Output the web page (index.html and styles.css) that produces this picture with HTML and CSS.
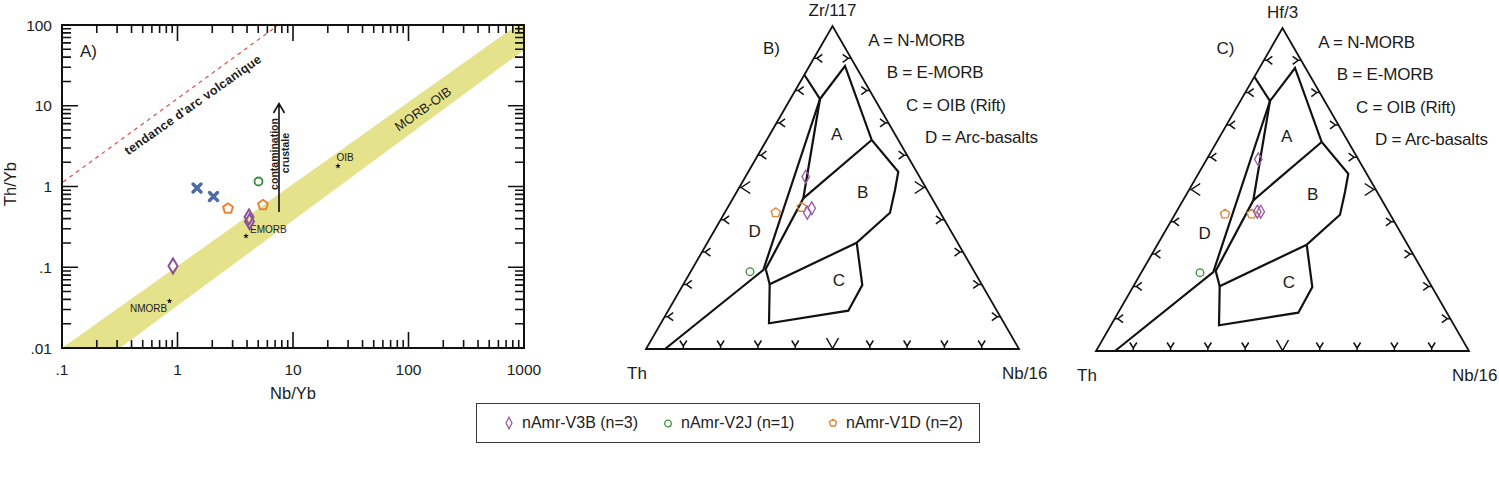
FILE: index.html
```html
<!DOCTYPE html>
<html lang="fr">
<head>
<meta charset="utf-8">
<title>Diagrammes géochimiques</title>
<link rel="stylesheet" href="styles.css">
</head>
<body>
<div class="figure">
  <div class="panels">
    <svg class="panel" width="600" height="400" viewBox="0 0 600 400">
      <defs>
        <path id="xdec" class="tick" d="M34.77 0v-8M55.11 0v-8M69.54 0v-8M80.73 0v-8M89.88 0v-8M97.61 0v-8M104.31 0v-8M110.21 0v-8M115.5 0v-16"/>
        <path id="ydec" class="tick" d="M0 -24.31h9M0 -38.53h9M0 -48.62h9M0 -56.44h9M0 -62.84h9M0 -68.24h9M0 -72.92h9M0 -77.05h9M0 -80.75h16"/>
        <path id="mkDiaA" d="M0 -7.5L4.5 0L0 7.5L-4.5 0Z"/>
        <path id="mkPentA" d="M0 -5.2L4.95 -1.6L3.06 4.2L-3.06 4.2L-4.95 -1.6Z"/>
        <path id="mkDia" d="M0 -6.5L3.8 0L0 6.5L-3.8 0Z"/>
        <path id="mkPent" d="M0 -4.8L4.57 -1.48L2.82 3.88L-2.82 3.88L-4.57 -1.48Z"/>
        <path id="mkX" d="M-4 -4L4 4M4 -4L-4 4"/>
        <polygon id="mkStar" points="0,-3 0.71,-0.97 2.85,-0.93 1.14,0.37 1.76,2.43 0,1.2 -1.76,2.43 -1.14,0.37 -2.85,-0.93 -0.71,-0.97"/>
        <path id="tb" d="M0 0v-3M-3.5 -8.5L0 -3L3.5 -8.5"/>
        <path id="tbM" d="M-6 -11L0 -0.5L6 -11"/>
        <path id="tl" d="M0 0h3M8.5 -4L3 0L8.5 4"/>
        <path id="tlM" d="M0 0h2M11 -6L2 0L11 6"/>
      </defs>

      <!-- MORB-OIB array -->
      <polygon class="band" points="62,348 120,348 524,50 524,25 517,25"/>
      <line class="arc" x1="63" y1="182" x2="277" y2="26"/>

      <text class="lbl-arc" transform="translate(193 105) rotate(-35.2)" text-anchor="middle" dy="4">tendance d'arc volcanique</text>
      <text class="lbl-band" transform="translate(423 109) rotate(-35.5)" text-anchor="middle" dy="4.5">MORB-OIB</text>

      <!-- axes -->
      <rect class="axis" x="62" y="25" width="462" height="323"/>
      <g id="xticks">
        <use href="#xdec" x="62" y="348"/>
        <use href="#xdec" x="177.5" y="348"/>
        <use href="#xdec" x="293" y="348"/>
        <use href="#xdec" x="408.5" y="348"/>
      </g>
      <use href="#xticks" transform="matrix(1 0 0 -1 0 373)"/>
      <g id="yticks">
        <use href="#ydec" x="62" y="348"/>
        <use href="#ydec" x="62" y="267.25"/>
        <use href="#ydec" x="62" y="186.5"/>
        <use href="#ydec" x="62" y="105.75"/>
      </g>
      <use href="#yticks" transform="matrix(-1 0 0 1 586 0)"/>

      <g class="t-num" text-anchor="end">
        <text x="52" y="30.5">100</text>
        <text x="52" y="111">10</text>
        <text x="52" y="192">1</text>
        <text x="52" y="272.5">.1</text>
        <text x="52" y="353.5">.01</text>
      </g>
      <g class="t-num" text-anchor="middle">
        <text x="62" y="375">.1</text>
        <text x="177.5" y="375">1</text>
        <text x="293" y="375">10</text>
        <text x="408.5" y="375">100</text>
        <text x="524" y="375">1000</text>
      </g>
      <text class="t-axis" x="293" y="399" text-anchor="middle">Nb/Yb</text>
      <text class="t-axis" transform="translate(16 184) rotate(-90)" text-anchor="middle">Th/Yb</text>
      <text class="t-panel" x="80" y="56.5">A)</text>

      <!-- crustal contamination arrow -->
      <path class="arrow" d="M279 212V104M273.5 113L279 103.5L284.5 113"/>
      <text class="lbl-contam" transform="translate(277.5 154) rotate(-90)" text-anchor="middle">contamination</text>
      <text class="lbl-contam" transform="translate(289 153) rotate(-90)" text-anchor="middle">crustale</text>

      <!-- reference compositions -->
      <use href="#mkStar" class="star" x="169.5" y="301"/>
      <use href="#mkStar" class="star" x="246" y="236"/>
      <use href="#mkStar" class="star" x="338" y="166"/>
      <text class="lbl-ref" x="130" y="312">NMORB</text>
      <text class="lbl-ref" x="250" y="233">EMORB</text>
      <text class="lbl-ref" x="336.5" y="160.5">OIB</text>

      <!-- samples -->
      <use href="#mkX" class="m-x" x="197" y="188"/>
      <use href="#mkX" class="m-x" x="213.5" y="196.5"/>
      <circle class="m-circ-a" cx="258.5" cy="181.5" r="4"/>
      <use href="#mkPentA" class="m-pent-a" x="228" y="208.5"/>
      <use href="#mkPentA" class="m-pent-a" x="263" y="205"/>
      <use href="#mkDiaA" class="m-dia-a" x="173" y="266"/>
      <use href="#mkDiaA" class="m-dia-a" x="249" y="217"/>
      <use href="#mkDiaA" class="m-dia-a" x="249.5" y="221.5"/>
    </svg>

    <svg class="panel" width="450" height="400" viewBox="600 0 450 400">
      <g id="tern">
        <polygon class="tri" points="646,349 1019,349 832.5,26"/>
        <g class="tt">
          <use href="#tb" x="683.3" y="349"/>
          <use href="#tb" x="720.6" y="349"/>
          <use href="#tb" x="757.9" y="349"/>
          <use href="#tb" x="795.2" y="349"/>
          <use href="#tbM" x="832.5" y="349"/>
          <use href="#tb" x="869.8" y="349"/>
          <use href="#tb" x="907.1" y="349"/>
          <use href="#tb" x="944.4" y="349"/>
          <use href="#tb" x="981.7" y="349"/>

          <use href="#tl" x="664.65" y="316.7"/>
          <use href="#tl" x="683.3" y="284.4"/>
          <use href="#tl" x="701.95" y="252.1"/>
          <use href="#tl" x="720.6" y="219.8"/>
          <use href="#tlM" x="739.25" y="187.5"/>
          <use href="#tl" x="757.9" y="155.2"/>
          <use href="#tl" x="776.55" y="122.9"/>
          <use href="#tl" x="795.2" y="90.6"/>
          <use href="#tl" x="813.85" y="58.3"/>

          <use href="#tl" transform="translate(1000.35 316.7) scale(-1 1)"/>
          <use href="#tl" transform="translate(981.7 284.4) scale(-1 1)"/>
          <use href="#tl" transform="translate(963.05 252.1) scale(-1 1)"/>
          <use href="#tl" transform="translate(944.4 219.8) scale(-1 1)"/>
          <use href="#tlM" transform="translate(925.75 187.5) scale(-1 1)"/>
          <use href="#tl" transform="translate(907.1 155.2) scale(-1 1)"/>
          <use href="#tl" transform="translate(888.45 122.9) scale(-1 1)"/>
          <use href="#tl" transform="translate(869.8 90.6) scale(-1 1)"/>
          <use href="#tl" transform="translate(851.15 58.3) scale(-1 1)"/>
        </g>
        <g class="field">
          <polyline points="804.5,75 820,99 845,66 871.7,140 898.3,171.7 895,190 890,212.7 856.7,242.7 862.3,285 848.3,310.7 769,323.3 769.7,284.3 856.7,242.7"/>
          <polyline points="820,99 763.3,270 665,349"/>
          <polyline points="820,99 803.3,198.3 765.7,269 769.7,284.3"/>
          <line x1="871.7" y1="140" x2="803.3" y2="198.3"/>
        </g>
        <g class="t-field" text-anchor="middle">
          <text x="836.7" y="139.5">A</text>
          <text x="862.7" y="198">B</text>
          <text x="839" y="285.5">C</text>
          <text x="754.7" y="237">D</text>
        </g>
        <g class="t-key">
          <text x="868.3" y="46">A = N-MORB</text>
          <text x="886.7" y="77.5">B = E-MORB</text>
          <text x="906" y="111">C = OIB (Rift)</text>
          <text x="925" y="142.5">D = Arc-basalts</text>
        </g>
        <text class="t-apex" x="627" y="379">Th</text>
        <text class="t-apex" x="1002" y="379">Nb/16</text>
      </g>
      <text class="t-apex" x="832.5" y="16" text-anchor="middle">Zr/117</text>
      <text class="t-apex" x="763" y="54">B)</text>

      <use href="#mkDia" class="m-dia" x="805.7" y="176.7"/>
      <use href="#mkPent" class="m-pent" x="775.7" y="212.7"/>
      <use href="#mkPent" class="m-pent" x="801.7" y="207.3"/>
      <use href="#mkDia" class="m-dia" x="807.3" y="212.7"/>
      <use href="#mkDia" class="m-dia" x="811.7" y="208.3"/>
      <circle class="m-circ" cx="750" cy="271.7" r="3.8"/>
    </svg>

    <svg class="panel" width="449" height="400" viewBox="1050 0 449 400">
      <use href="#tern" transform="translate(450 2)"/>
      <text class="t-apex" x="1282.5" y="17.5" text-anchor="middle">Hf/3</text>
      <text class="t-apex" x="1216.5" y="54">C)</text>

      <use href="#mkDia" class="m-dia" x="1258.3" y="159.3"/>
      <use href="#mkPent" class="m-pent" x="1225" y="214"/>
      <use href="#mkPent" class="m-pent" x="1251.7" y="214"/>
      <use href="#mkDia" class="m-dia" x="1257.3" y="211.7"/>
      <use href="#mkDia" class="m-dia" x="1260.7" y="211.7"/>
      <circle class="m-circ" cx="1200" cy="272.7" r="3.8"/>
    </svg>
  </div>

  <div class="legend">
    <div class="legend-item">
      <svg class="legend-icon" viewBox="-5 -7 10 14"><path class="m-dia" d="M0 -5.8L3 0L0 5.8L-3 0Z"/></svg>
      <span>nAmr-V3B (n=3)</span>
    </div>
    <div class="legend-item">
      <svg class="legend-icon" viewBox="-5 -7 10 14"><circle class="m-circ" cx="0" cy="0.5" r="3.3"/></svg>
      <span>nAmr-V2J (n=1)</span>
    </div>
    <div class="legend-item">
      <svg class="legend-icon" viewBox="-5 -7 10 14"><path class="m-pent" d="M0 -3.8L3.6 -1.2L2.2 3L-2.2 3L-3.6 -1.2Z"/></svg>
      <span>nAmr-V1D (n=2)</span>
    </div>
  </div>
</div>
</body>
</html>
```

FILE: styles.css
```css
html, body {
  margin: 0;
  padding: 0;
  background: #ffffff;
}

.figure {
  width: 1499px;
  height: 485px;
  overflow: hidden;
}

.panels {
  display: flex;
  flex-direction: row;
}

.panel {
  display: block;
  flex: none;
  overflow: visible;
}

.panel text {
  font-family: "Liberation Sans", Arial, Helvetica, sans-serif;
  fill: #1c1c1c;
}

.band {
  fill: #e5e28c;
}

.arc {
  stroke: #d6524a;
  stroke-width: 1.2;
  stroke-dasharray: 4 4;
}

.axis {
  fill: none;
  stroke: #111111;
  stroke-width: 2;
}

.tick {
  fill: none;
  stroke: #111111;
  stroke-width: 1.6;
}

.t-num {
  font-size: 15.5px;
}

.t-axis {
  font-size: 16.5px;
}

.t-panel {
  font-size: 17px;
}

.lbl-arc {
  font-size: 12.5px;
  font-weight: bold;
  letter-spacing: 0.3px;
}

.lbl-band {
  font-size: 13px;
}

.lbl-contam {
  font-size: 10.5px;
  font-weight: bold;
}

.lbl-ref {
  font-size: 10px;
}

.arrow {
  fill: none;
  stroke: #111111;
  stroke-width: 1.6;
}

.star {
  fill: #111111;
}

.m-x {
  fill: none;
  stroke: #4c6aa8;
  stroke-width: 3.4;
  stroke-linecap: round;
}

.m-circ-a {
  fill: none;
  stroke: #3a8e3c;
  stroke-width: 1.8;
}

.m-pent-a {
  fill: none;
  stroke: #e8863a;
  stroke-width: 2;
  stroke-linejoin: round;
}

.m-dia-a {
  fill: none;
  stroke: #8b4f9c;
  stroke-width: 2;
}

.m-dia {
  fill: none;
  stroke: #9a5aa8;
  stroke-width: 1.3;
}

.m-pent {
  fill: none;
  stroke: #e2863e;
  stroke-width: 1.4;
  stroke-linejoin: round;
}

.m-circ {
  fill: none;
  stroke: #3a8e3c;
  stroke-width: 1.3;
}

.tri {
  fill: none;
  stroke: #111111;
  stroke-width: 1.8;
  stroke-linejoin: miter;
}

.tt use {
  fill: none;
  stroke: #111111;
  stroke-width: 1.5;
}

.field polyline,
.field line {
  fill: none;
  stroke: #111111;
  stroke-width: 2.2;
  stroke-linejoin: miter;
}

.t-field {
  font-size: 17px;
}

.t-key {
  font-size: 17px;
  letter-spacing: -0.2px;
}

.t-apex {
  font-size: 17px;
}

.legend {
  margin-left: 476px;
  margin-top: 3px;
  width: 504px;
  height: 40px;
  box-sizing: border-box;
  border: 1px solid #3a3a3a;
  display: grid;
  grid-template-columns: 159px 165px auto;
  align-items: center;
  padding-left: 27px;
  font-family: "Liberation Sans", Arial, Helvetica, sans-serif;
  font-size: 16px;
  color: #222222;
}

.legend-item {
  display: flex;
  align-items: center;
  gap: 8px;
  white-space: nowrap;
}

.legend-icon {
  display: block;
  width: 10px;
  height: 14px;
  flex: none;
}
```
